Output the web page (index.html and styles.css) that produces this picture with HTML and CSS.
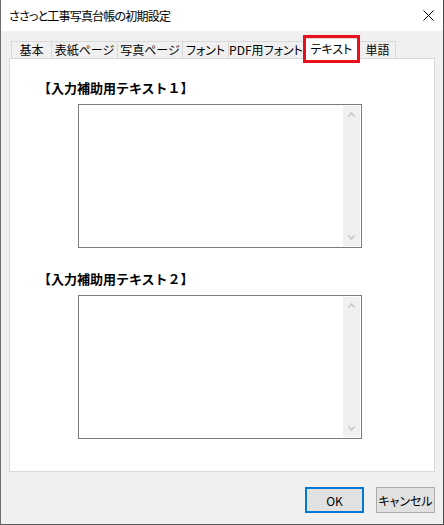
FILE: index.html
```html
<!DOCTYPE html>
<html lang="ja">
<head>
    <meta charset="UTF-8">
    <meta name="viewport" content="width=device-width, initial-scale=1.0">
    <title>ささっと工事写真台帳の初期設定</title>
    <link rel="stylesheet" href="styles.css">
</head>
<body>
    <div class="dialog">
        <div class="titlebar">
            <span class="title">ささっと工事写真台帳の初期設定</span>
            <svg class="close" width="11" height="11" viewBox="0 0 11 11">
                <path d="M0.5 0.5L10.5 10.5M10.5 0.5L0.5 10.5" stroke="#000" stroke-width="1" fill="none"/>
            </svg>
        </div>

        <div class="dialog-body">
            <div class="tabs">
                <div class="tab w-kihon">基本</div>
                <div class="tab w-hyoshi">表紙ページ</div>
                <div class="tab w-shashin">写真ページ</div>
                <div class="tab w-font">フォント</div>
                <div class="tab w-pdf">PDF用フォント</div>
                <div class="tab w-text active">テキスト</div>
                <div class="tab w-tango">単語</div>
            </div>

            <div class="panel">
                <div class="field">
                    <div class="label">【入力補助用テキスト１】</div>
                    <div class="textbox">
                        <textarea></textarea>
                        <div class="vscroll">
                            <div class="arrow">
                                <svg width="7" height="5" viewBox="0 0 7 5"><path d="M0.5 4.5L3.5 1L6.5 4.5" stroke="#c2c2c2" stroke-width="1.2" fill="none"/></svg>
                            </div>
                            <div class="arrow">
                                <svg width="7" height="5" viewBox="0 0 7 5"><path d="M0.5 0.5L3.5 4L6.5 0.5" stroke="#c2c2c2" stroke-width="1.2" fill="none"/></svg>
                            </div>
                        </div>
                    </div>
                </div>

                <div class="field">
                    <div class="label">【入力補助用テキスト２】</div>
                    <div class="textbox">
                        <textarea></textarea>
                        <div class="vscroll">
                            <div class="arrow">
                                <svg width="7" height="5" viewBox="0 0 7 5"><path d="M0.5 4.5L3.5 1L6.5 4.5" stroke="#c2c2c2" stroke-width="1.2" fill="none"/></svg>
                            </div>
                            <div class="arrow">
                                <svg width="7" height="5" viewBox="0 0 7 5"><path d="M0.5 0.5L3.5 4L6.5 0.5" stroke="#c2c2c2" stroke-width="1.2" fill="none"/></svg>
                            </div>
                        </div>
                    </div>
                </div>
            </div>

            <div class="footer">
                <button class="btn default">OK</button>
                <button class="btn">キャンセル</button>
            </div>
        </div>
    </div>
</body>
</html>
```

FILE: styles.css
```css
body {
    margin: 0;
    font-family: "Noto Sans CJK JP", "Noto Sans", sans-serif;
    font-size: 12px;
    font-feature-settings: "palt";
    color: #000;
    background: #f0f0f0;
}

.dialog {
    width: 444px;
    height: 525px;
    box-sizing: border-box;
    display: flex;
    flex-direction: column;
    border-left: 1px solid #6e6e6e;
    border-right: 1px solid #4a4a4a;
    border-bottom: 1px solid #5a5a5a;
    background: #f0f0f0;
}

/* タイトルバー */
.titlebar {
    height: 31px;
    flex-shrink: 0;
    background: #fff;
    display: flex;
    align-items: center;
    justify-content: space-between;
    padding: 0 9px 0 8px;
}

.title {
    font-size: 12px;
    line-height: 16px;
    letter-spacing: -0.8px;
}

.dialog-body {
    flex: 1;
    display: flex;
    flex-direction: column;
    padding: 0 7px 0 8px;
}

/* タブ */
.tabs {
    height: 27px;
    display: flex;
    align-items: flex-end;
    padding-left: 2px;
}

.tab {
    box-sizing: border-box;
    height: 17px;
    border: 1px solid #d9d9d9;
    border-bottom: none;
    border-left: none;
    background: #f0f0f0;
    text-align: center;
    line-height: 16px;
    white-space: nowrap;
}

.tab:first-child {
    border-left: 1px solid #d9d9d9;
}

.tab.active {
    position: relative;
    z-index: 1;
    height: 21px;
    margin-bottom: -1px;
    background: #fff;
    line-height: 20px;
}

/* 赤枠 */
.tab.active::after {
    content: "";
    position: absolute;
    left: -1px;
    right: -1px;
    top: -4px;
    bottom: -4px;
    border: 3px solid #e8101a;
}

.w-kihon { width: 41px; }
.w-hyoshi { width: 66px; }
.w-shashin { width: 65px; }
.w-font { width: 46px; }
.w-pdf { width: 75px; }
.w-text { width: 56px; }
.w-tango { width: 36px; }

/* パネル */
.panel {
    box-sizing: border-box;
    width: 426px;
    height: 414px;
    background: #fff;
    border: 1px solid #d9d9d9;
    padding-top: 20px;
    display: flex;
    flex-direction: column;
    gap: 22px;
}

.label {
    padding-left: 28px;
    font-size: 13px;
    font-weight: bold;
    line-height: 18px;
    font-feature-settings: normal;
}

.textbox {
    box-sizing: border-box;
    width: 284px;
    height: 144px;
    margin: 7px 0 0 68px;
    border: 1px solid #7a7a7a;
    padding: 1px;
    display: flex;
}

.textbox textarea {
    flex: 1;
    border: none;
    resize: none;
    outline: none;
    padding: 0;
    margin: 0;
}

.vscroll {
    width: 17px;
    background: #f0f0f0;
    display: flex;
    flex-direction: column;
    justify-content: space-between;
}

.arrow {
    height: 17px;
    display: flex;
    align-items: center;
    justify-content: center;
}

/* ボタン */
.footer {
    display: flex;
    justify-content: flex-end;
    gap: 12px;
    margin-top: 15px;
    padding-right: 1px;
}

.btn {
    box-sizing: border-box;
    width: 59px;
    height: 26px;
    padding: 0;
    font-family: inherit;
    font-size: 12px;
    font-feature-settings: "palt";
    background: #e1e1e1;
    border: 1px solid #adadad;
    color: #000;
}

.btn.default {
    border: 2px solid #0078d7;
}
```
